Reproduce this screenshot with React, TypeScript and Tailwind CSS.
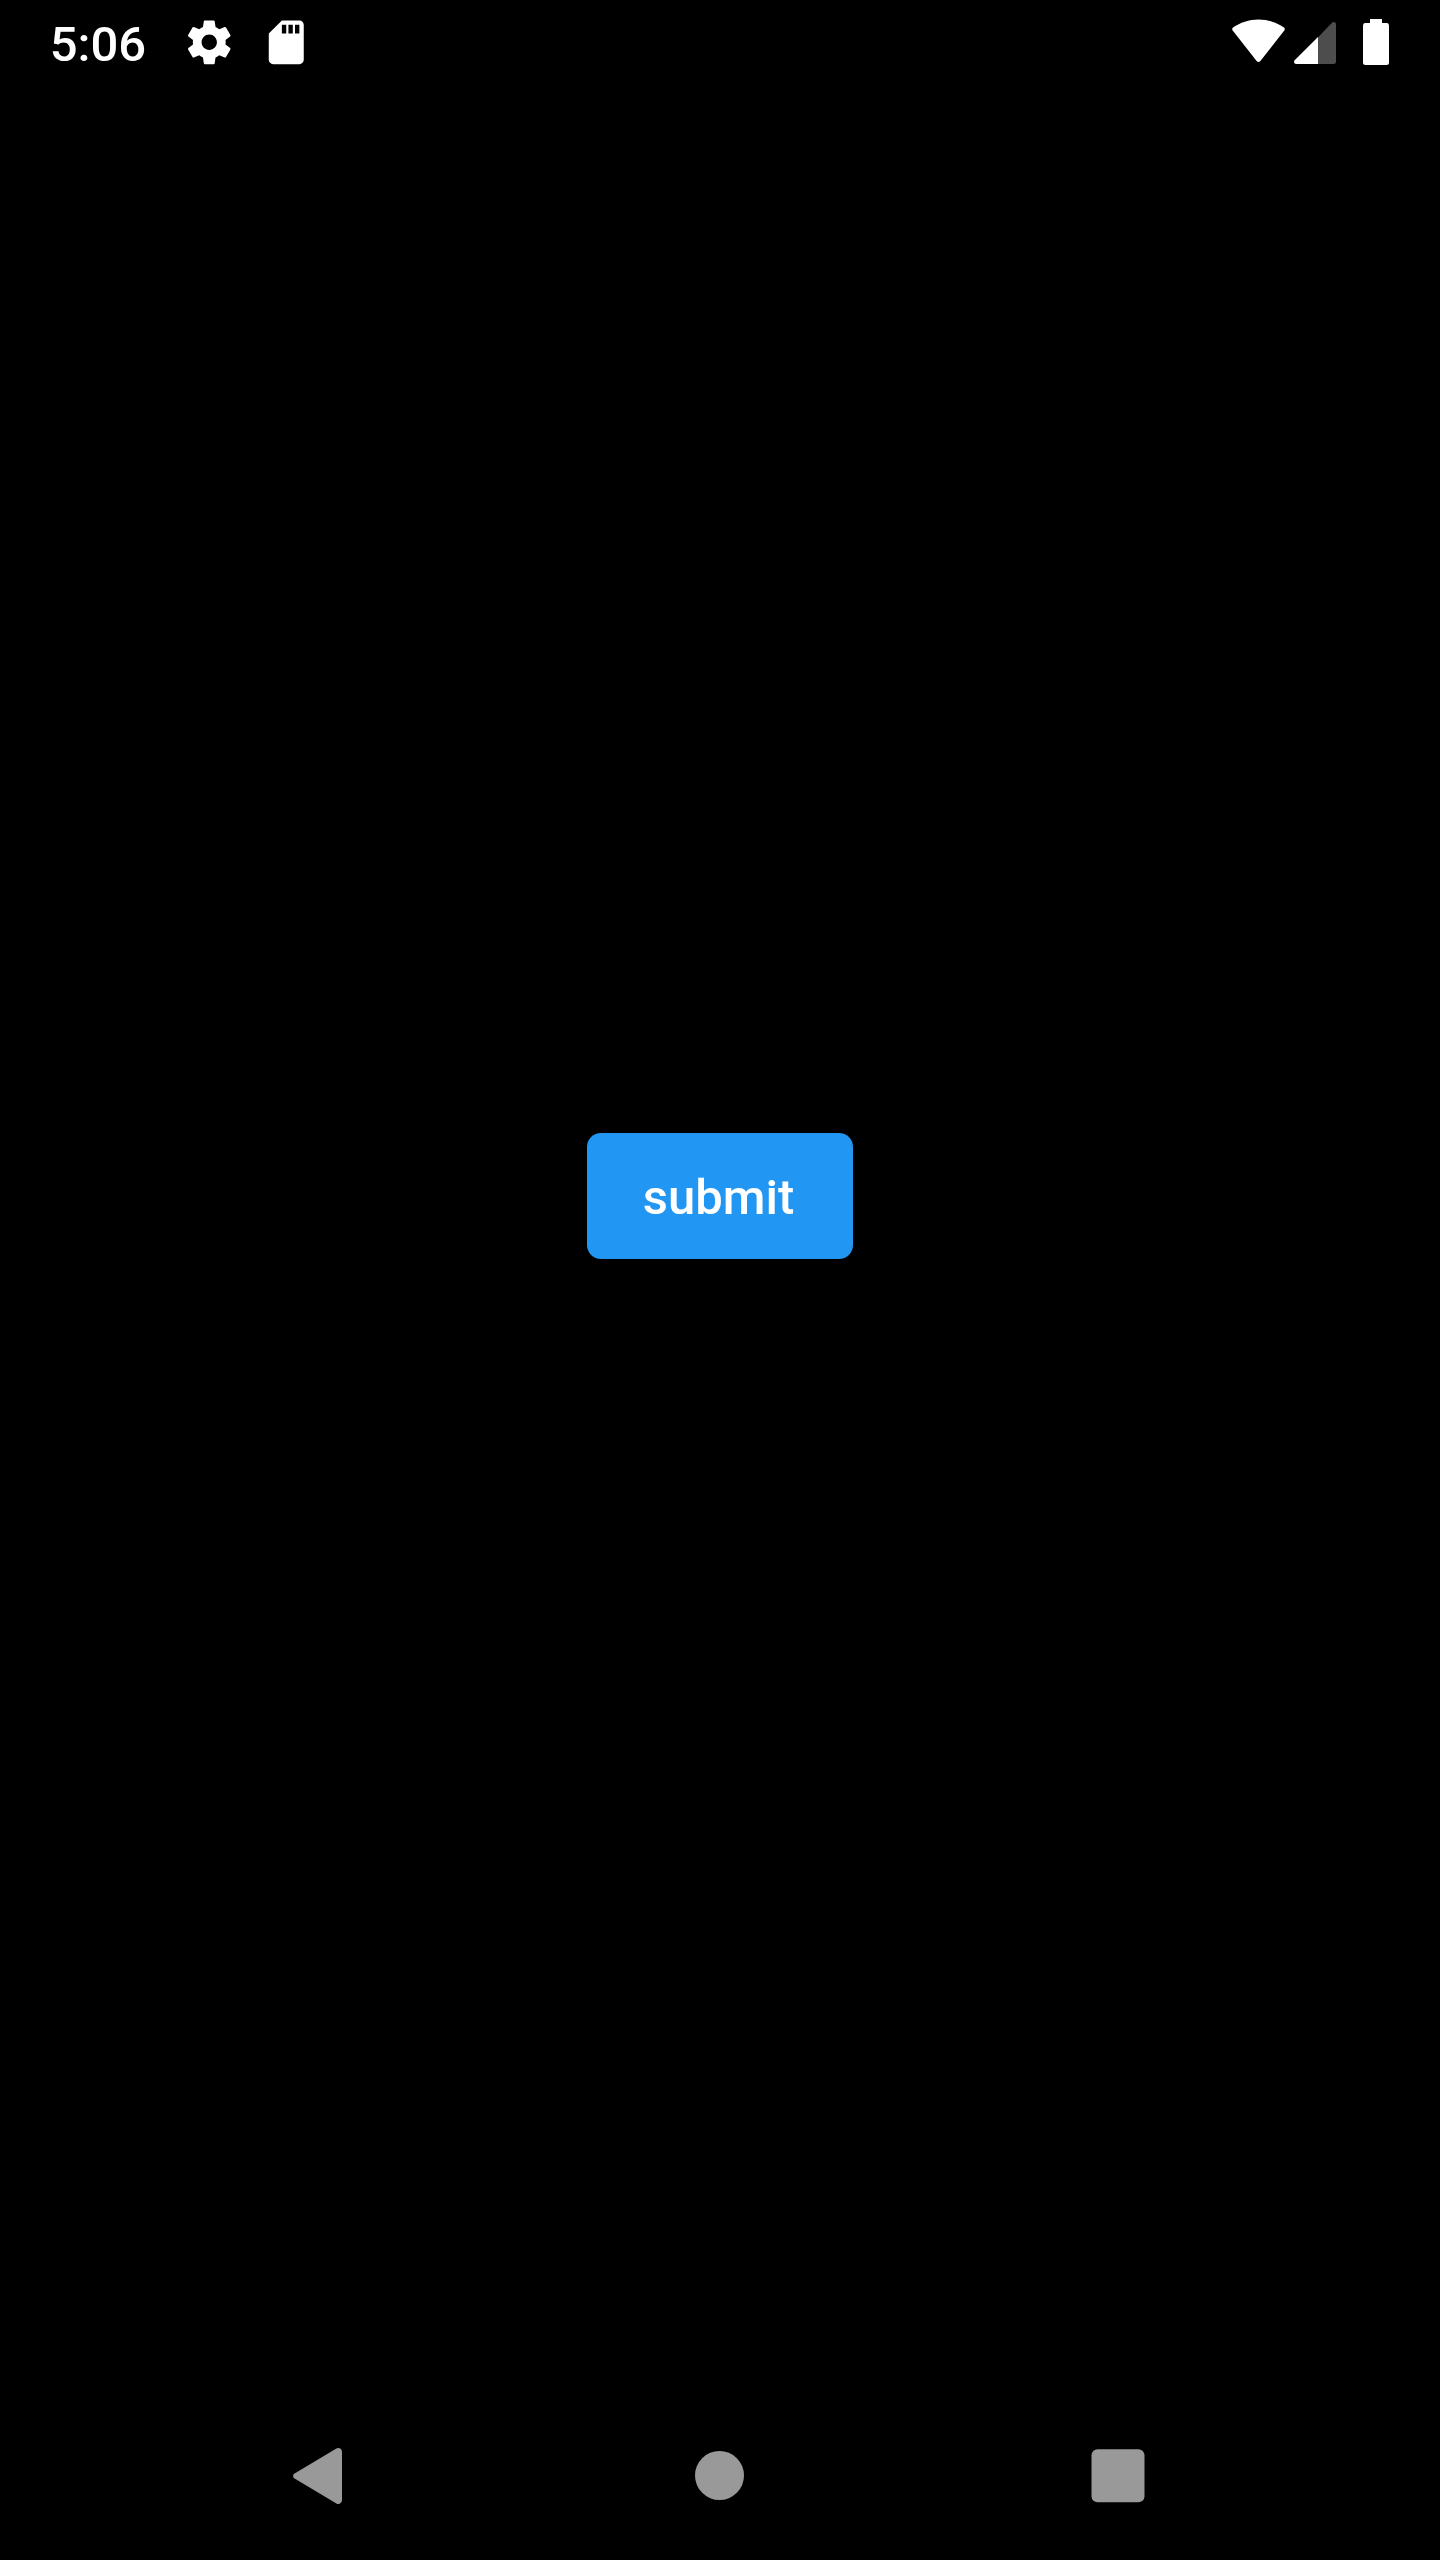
function SettingsIcon() {
  return (
    <svg className="ml-[37.5px] size-[52.5px] shrink-0" viewBox="0 0 24 24" fill="currentColor">
      <path d="M19.43 12.98c.04-.32.07-.64.07-.98s-.03-.66-.07-.98l2.11-1.65c.19-.15.24-.42.12-.64l-2-3.46c-.12-.22-.39-.3-.61-.22l-2.49 1c-.52-.4-1.08-.73-1.69-.98l-.38-2.65C14.46 2.18 14.25 2 14 2h-4c-.25 0-.46.18-.49.42l-.38 2.65c-.61.25-1.17.59-1.69.98l-2.49-1c-.23-.09-.49 0-.61.22l-2 3.46c-.13.22-.07.49.12.64l2.11 1.65c-.04.32-.07.65-.07.98s.03.66.07.98l-2.11 1.65c-.19.15-.24.42-.12.64l2 3.46c.12.22.39.3.61.22l2.49-1c.52.4 1.08.73 1.69.98l.38 2.65c.03.24.24.42.49.42h4c.25 0 .46-.18.49-.42l.38-2.65c.61-.25 1.17-.59 1.69-.98l2.49 1c.23.09.49 0 .61-.22l2-3.46c.12-.22.07-.49-.12-.64l-2.11-1.65zM12 15.5c-1.93 0-3.5-1.57-3.5-3.5s1.57-3.5 3.5-3.5 3.5 1.57 3.5 3.5-1.57 3.5-3.5 3.5z" />
    </svg>
  );
}

function SdCardIcon() {
  return (
    <svg className="ml-[24.5px] size-[52.5px] shrink-0" viewBox="0 0 24 24" fill="currentColor">
      <path d="M18 2h-8L4.02 8 4 20c0 1.1.9 2 2 2h12c1.1 0 2-.9 2-2V4c0-1.1-.9-2-2-2zm-6 6h-2V4h2v4zm3 0h-2V4h2v4zm3 0h-2V4h2v4z" />
    </svg>
  );
}

function WifiIcon() {
  return (
    <svg className="h-[43px] w-[53px]" viewBox="0 0 53 43" fill="currentColor">
      <path d="M26.5 0.4C17 0.4 8.2 3.4 1 8.4Q-0.4 9.6 0.7 11.6L24.6 42Q26.5 44 28.4 42L52.3 11.6Q53.4 9.6 52 8.4C44.8 3.4 36 0.4 26.5 0.4Z" />
    </svg>
  );
}

function SignalIcon() {
  return (
    <svg className="ml-[9px] h-[42px] w-[42px]" viewBox="0 0 42 42">
      <path d="M24 15.3V42H39.5Q42 42 42 39.5V2.3Q42 0 39.8 0Q38.6 0 37.8 0.9Z" fill="#4d4d4d" />
      <path d="M24 14.9V42H2.3Q0 42 0 39.9Q0 38.8 0.9 38Z" fill="#ffffff" />
    </svg>
  );
}

function BatteryIcon() {
  return (
    <svg className="ml-[27px] h-[46px] w-[26px]" viewBox="0 0 26 46" fill="currentColor">
      <path d="M7 0H19V4H24Q26 4.4 26 6.5V43.5Q26 46 23.5 46H2.5Q0 46 0 43.5V6.5Q0 4.4 2 4H7Z" />
    </svg>
  );
}

function StatusBar() {
  return (
    <header className="flex h-[84px] shrink-0 items-start justify-between pr-[51px] pl-[49.7px] text-white">
      <div className="flex items-start pt-[15.7px]">
        <span className="w-24 text-[49px] leading-[57px] font-medium whitespace-nowrap">5:06</span>
        <SettingsIcon />
        <SdCardIcon />
      </div>
      <div className="flex items-start pt-[19px]">
        <WifiIcon />
        <div className="pt-[3px]">
          <SignalIcon />
        </div>
        <BatteryIcon />
      </div>
    </header>
  );
}

function NavigationBar() {
  return (
    <nav className="flex h-[168px] shrink-0 items-center pl-[293px] text-[#999999]">
      <button aria-label="Back">
        <svg className="block h-14 w-[49px]" viewBox="0 0 49 56" fill="currentColor">
          <path d="M1.6 25.4L43.4 0.6C46 -0.9 49 1 49 4V52C49 55 46 56.9 43.4 55.4L1.6 30.6Q-1.6 28 1.6 25.4Z" />
        </svg>
      </button>
      <button aria-label="Home" className="mb-px ml-[353px] size-[49px] rounded-full bg-[#999999]" />
      <button aria-label="Overview" className="ml-[347px]">
        <svg className="block size-[54px]" viewBox="0 0 54 54" fill="currentColor">
          <rect x="0.5" y="0.3" width="53" height="53" rx="6" />
        </svg>
      </button>
    </nav>
  );
}

export default function App() {
  return (
    <div className="flex h-[2560px] w-[1440px] flex-col bg-black font-[Roboto,sans-serif]">
      <StatusBar />
      <main className="flex flex-1 items-center justify-center pb-[84px]">
        <button className="h-[126px] w-[266px] rounded-[14px] bg-[#2196f3] pt-[3px] pr-[3px] text-center text-[49px] leading-[57px] font-medium text-white">
          submit
        </button>
      </main>
      <NavigationBar />
    </div>
  );
}
